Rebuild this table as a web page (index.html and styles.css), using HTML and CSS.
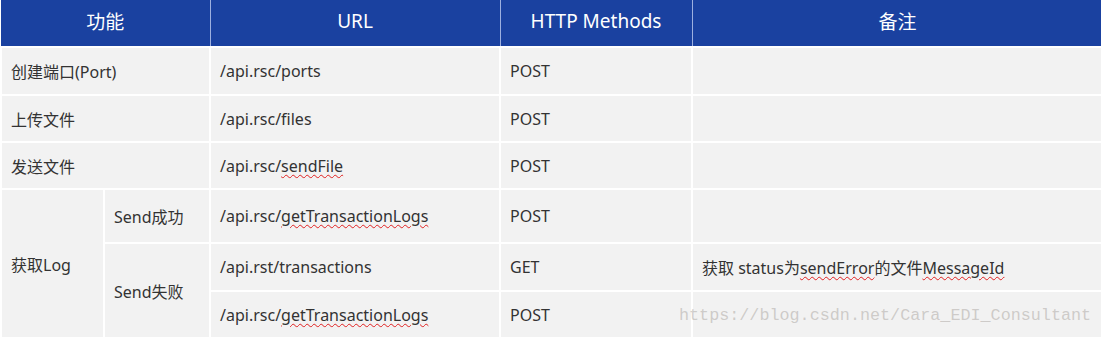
FILE: index.html
```html
<!DOCTYPE html>
<html lang="zh-CN">
<head>
<meta charset="utf-8">
<title>API</title>
<link rel="stylesheet" href="styles.css">
</head>
<body>
<div class="page">
<table class="api">
  <colgroup>
    <col class="c1"><col class="c2"><col class="c3"><col class="c4"><col class="c5">
  </colgroup>
  <thead>
    <tr class="r-head">
      <th colspan="2">功能</th>
      <th>URL</th>
      <th>HTTP Methods</th>
      <th>备注</th>
    </tr>
  </thead>
  <tbody>
    <tr class="r1">
      <td colspan="2">创建端口(Port)</td>
      <td>/api.rsc/ports</td>
      <td>POST</td>
      <td></td>
    </tr>
    <tr class="r2">
      <td colspan="2">上传文件</td>
      <td>/api.rsc/files</td>
      <td>POST</td>
      <td></td>
    </tr>
    <tr class="r3">
      <td colspan="2">发送文件</td>
      <td>/api.rsc/<span class="sp">sendFile</span></td>
      <td>POST</td>
      <td></td>
    </tr>
    <tr class="r4">
      <td rowspan="3">获取Log</td>
      <td>Send成功</td>
      <td>/api.rsc/<span class="sp">getTransactionLogs</span></td>
      <td>POST</td>
      <td></td>
    </tr>
    <tr class="r5">
      <td rowspan="2">Send失败</td>
      <td>/api.rst/transactions</td>
      <td>GET</td>
      <td>获取 status为<span class="sp">sendError</span>的文件<span class="sp">MessageId</span></td>
    </tr>
    <tr class="r6">
      <td>/api.rsc/<span class="sp">getTransactionLogs</span></td>
      <td>POST</td>
      <td></td>
    </tr>
  </tbody>
</table>
<div class="watermark">https://blog.csdn.net/Cara_EDI_Consultant</div>
</div>
</body>
</html>
```
FILE: styles.css
```css
html, body {
  margin: 0;
  padding: 0;
  background: #ffffff;
}
.page {
  position: relative;
  width: 1101px;
  height: 338px;
  overflow: hidden;
}
.api {
  border-collapse: collapse;
  table-layout: fixed;
  width: 1102px;
  font-family: "Noto Sans", "Noto Sans CJK SC", sans-serif;
  font-size: 16px;
  color: #333333;
}
.c1 { width: 103px; }
.c2 { width: 106px; }
.c3 { width: 290px; }
.c4 { width: 192px; }
.c5 { width: 411px; }
.api th {
  background: #1a41a0;
  color: #ffffff;
  font-weight: normal;
  font-size: 19px;
  text-align: center;
  border-right: 1px solid #9db0e0;
  border-bottom: 1px solid #9db0e0;
  padding: 0 0 5px 0;
  height: 41px;
}
.api td {
  background: #f2f2f2;
  border: 2px solid #ffffff;
  padding: 0 0 0 9px;
  text-align: left;
  vertical-align: middle;
}
.r1 td { height: 46px; }
.r2 td { height: 45px; }
.r3 td { height: 45px; }
.r4 td { height: 52px; }
.r5 td { height: 46px; }
.r6 td { height: 45px; }
.sp {
  text-decoration: underline wavy #e02020;
  text-decoration-thickness: 1px;
  text-underline-offset: 2px;
}
.watermark {
  position: absolute;
  left: 679px;
  top: 306px;
  font-family: "Liberation Mono", monospace;
  font-size: 16.75px;
  color: rgba(175, 170, 165, 0.55);
  white-space: nowrap;
}
```
